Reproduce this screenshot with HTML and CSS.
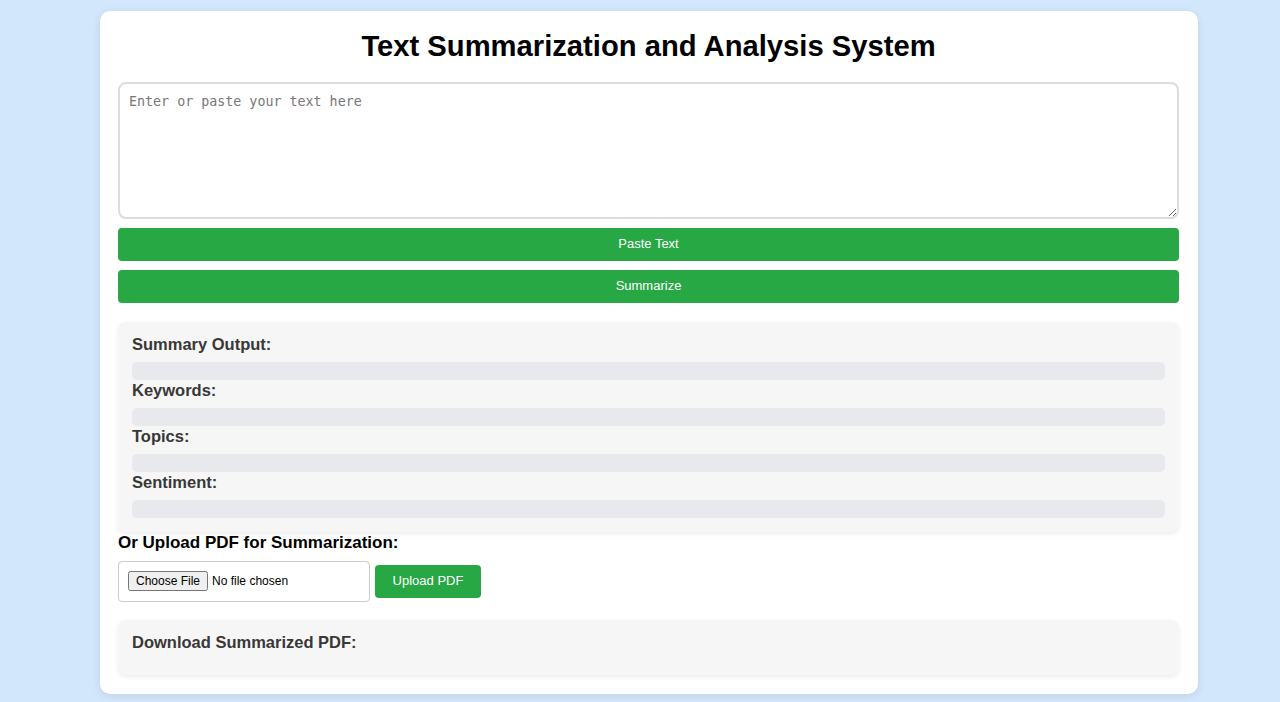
FILE: index.html
```html
<!DOCTYPE html>
<html lang="en">
<head>
<meta charset="utf-8">
<title>Text Summarization and Analysis System</title>
<link rel="stylesheet" href="styles.css">
</head>
<body>
<div class="container">
  <h1 class="title">Text Summarization and Analysis System</h1>
  <textarea class="input-text" placeholder="Enter or paste your text here"></textarea>
  <button class="btn btn-wide">Paste Text</button>
  <button class="btn btn-wide">Summarize</button>

  <div class="panel output">
    <h3 class="label">Summary Output:</h3>
    <div class="bar"></div>
    <h3 class="label">Keywords:</h3>
    <div class="bar"></div>
    <h3 class="label">Topics:</h3>
    <div class="bar"></div>
    <h3 class="label">Sentiment:</h3>
    <div class="bar"></div>
  </div>

  <h3 class="upload-title">Or Upload PDF for Summarization:</h3>
  <div class="upload-row">
    <input type="file" class="file-input" accept="application/pdf">
    <button class="btn btn-upload">Upload PDF</button>
  </div>

  <div class="panel download">
    <h3 class="label">Download Summarized PDF:</h3>
  </div>
</div>
</body>
</html>
```

FILE: styles.css
```css
* { box-sizing: border-box; }

body {
  margin: 0;
  background: #d3e7fc;
  font-family: "Liberation Sans", Arial, sans-serif;
  padding: 11px 0 8px;
}

.container {
  width: 1098px;
  margin: 0 0 0 100px;
  background: #fff;
  border-radius: 10px;
  padding: 18px 19px 19px 18px;
  box-shadow: 0 2px 8px rgba(0, 0, 0, 0.1);
  display: flex;
  flex-direction: column;
}

.title {
  margin: 0 0 19px;
  text-align: center;
  font-size: 29.2px;
  line-height: 34px;
  font-weight: bold;
  color: #000;
}

.input-text {
  display: block;
  width: 100%;
  height: 137px;
  border: 2px solid #ddd;
  border-radius: 8px;
  padding: 10px 9px;
  font-family: "DejaVu Sans Mono", "Liberation Mono", monospace;
  font-size: 13.33px;
  resize: vertical;
  margin: 0 0 9px;
}

.input-text::placeholder { color: #777; }

.btn {
  background: #28a745;
  color: #fff;
  border: none;
  border-radius: 4px;
  font-family: "Liberation Sans", Arial, sans-serif;
  font-size: 13px;
  cursor: pointer;
  padding: 0 0 2px;
}

.btn-wide {
  width: 100%;
  height: 33px;
  margin-bottom: 9px;
}

.btn-wide + .btn-wide { margin-bottom: 0; }

.panel {
  background: #f6f6f6;
  border-radius: 8px;
  box-shadow: 0 2px 5px rgba(0, 0, 0, 0.08);
  padding: 13px 14px 14px;
}

.output { margin-top: 19px; }

.label {
  margin: 0;
  font-size: 16.5px;
  line-height: 18px;
  font-weight: bold;
  color: #383838;
}

.bar {
  height: 18px;
  background: #e7e9ec;
  border-radius: 5px;
  margin: 9px 0 1px;
}

.output .bar:last-child { margin-bottom: 0; }

.upload-title {
  margin: 2px 0 9px;
  font-size: 17px;
  line-height: 18px;
  font-weight: bold;
  color: #000;
}

.upload-row {
  display: flex;
  align-items: center;
  gap: 5px;
}

.file-input {
  width: 252px;
  height: 41px;
  border: 1px solid #ccc;
  border-radius: 4px;
  padding: 9px;
  font-family: "Liberation Sans", Arial, sans-serif;
  font-size: 12px;
  background: #fff;
}

.btn-upload {
  width: 106px;
  height: 33px;
}

.download {
  margin-top: 18px;
  height: 55px;
  padding-top: 13px;
}
```
